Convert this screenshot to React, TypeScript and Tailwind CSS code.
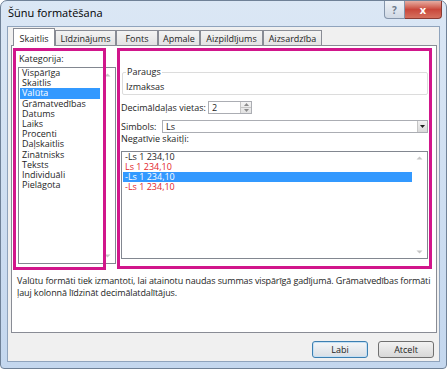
const categories = [
  "Vispārīga",
  "Skaitlis",
  "Valūta",
  "Grāmatvedības",
  "Datums",
  "Laiks",
  "Procenti",
  "Daļskaitlis",
  "Zinātnisks",
  "Teksts",
  "Individuāli",
  "Pielāgota",
];

const negatives = [
  { label: "-Ls 1 234,10", red: false },
  { label: "Ls 1 234,10", red: true },
  { label: "-Ls 1 234,10", red: false, selected: true },
  { label: "-Ls 1 234,10", red: true },
];

const tabs = [
  { label: "Skaitlis", w: "w-[42px]", active: true },
  { label: "Līdzinājums", w: "w-[61px]" },
  { label: "Fonts", w: "w-[42px]" },
  { label: "Apmale", w: "w-[42px]" },
  { label: "Aizpildījums", w: "w-[63px]" },
  { label: "Aizsardzība", w: "w-[59px]" },
];

function ScrollArrow({ up }: { up?: boolean }) {
  return (
    <svg width="7" height="4" viewBox="0 0 7 4" className={up ? "rotate-180" : ""}>
      <path d="M0.5 0.5 L3.5 3.5 L6.5 0.5 Z" fill="#c6c6c6" />
    </svg>
  );
}

export default function App() {
  return (
    <div className="w-[447px] h-[370px] bg-white font-['Open_Sans',sans-serif] text-[9px] text-[#1e1e1e] leading-none">
      <div className="w-[447px] h-[369px] border border-[#6f8197] rounded-t-[7px] rounded-b-[4px] bg-gradient-to-b from-[#dbe7f5] to-[#c4d7ee] flex flex-col">
        {/* title bar */}
        <div className="h-[25px] flex items-start shrink-0">
          <span className="pl-[7px] pt-[6px] text-[11px] text-black">Šūnu formatēšana</span>
          <div className="ml-auto mr-[4px] flex">
            <div className="w-[21px] h-[18px] border border-t-0 border-[#8595ab] rounded-bl-[4px] bg-gradient-to-b from-[#eef2f7] to-[#d0d9e5] flex items-center justify-center text-[10px] font-bold text-[#6d7a8a]">
              ?
            </div>
            <div className="w-[37px] h-[18px] border border-t-0 border-l-0 border-[#8a3a33] rounded-br-[4px] bg-gradient-to-b from-[#e5aca2] via-[#c9473b] to-[#d5705f] flex items-center justify-center text-[11px] font-bold text-white">
              x
            </div>
          </div>
        </div>

        {/* client area */}
        <div className="mx-[6px] h-[336px] border border-[#8fa3bc] bg-[#f0f0f0] flex flex-col">
          <div className="mt-[1px] ml-[5px] h-[17px] flex items-end">
            {tabs.map((t) =>
              t.active ? (
                <div
                  key={t.label}
                  className={`${t.w} h-[18px] -mb-px relative z-10 bg-white border border-b-0 border-[#898c95] flex items-center justify-center pt-[1px]`}
                >
                  {t.label}
                </div>
              ) : (
                <div
                  key={t.label}
                  className={`${t.w} h-[15px] border border-b-0 border-[#898c95] bg-gradient-to-b from-[#f3f3f3] to-[#e3e3e3] flex items-center justify-center`}
                >
                  {t.label}
                </div>
              ),
            )}
          </div>

          {/* tab panel */}
          <div className="ml-[3px] w-[426px] h-[288px] border border-[#898c95] bg-white relative">
            <div className="flex pl-[6px]">
              {/* category column */}
              <div className="w-[98px] flex flex-col">
                <div className="mt-[8px] ml-[1px] h-[10px] leading-[10px]">Kategorija:</div>
                <div className="mt-[3px] h-[197px] border border-[#828790] bg-white flex">
                  <div className="flex-1 flex flex-col pl-[1px]">
                    {categories.map((c) => (
                      <div
                        key={c}
                        className={`h-[10.2px] leading-[10.2px] pl-[2px] ${c === "Valūta" ? "bg-[#3399ff] text-white" : ""}`}
                      >
                        {c}
                      </div>
                    ))}
                  </div>
                  <div className="w-[15px] flex flex-col items-center justify-between py-[5px]">
                    <ScrollArrow up />
                    <ScrollArrow />
                  </div>
                </div>
              </div>

              {/* settings column */}
              <div className="ml-[5px] w-[307px] flex flex-col">
                <fieldset className="mt-[21px] ml-[1px] w-[306px] border border-[#dcdcdc] rounded-[2px] px-[3px] pb-[2px]">
                  <legend className="h-[10px] leading-[10px] px-[1px]">Paraugs</legend>
                  <div className="pt-[5px] h-[15px] leading-[10px]">Izmaksas</div>
                </fieldset>

                <div className="mt-[6px] h-[13px] flex items-center">
                  <span className="w-[87px]">Decimāldaļas vietas:</span>
                  <div className="w-[44px] h-[13px] border border-[#abadb3] flex items-stretch bg-white">
                    <span className="flex-1 pl-[3px] flex items-center">2</span>
                    <div className="w-[11px] border-l border-[#c5c5c5] flex flex-col bg-gradient-to-b from-[#f4f4f4] to-[#e2e2e2]">
                      <div className="flex-1 flex items-center justify-center border-b border-[#c5c5c5]">
                        <svg width="5" height="3" viewBox="0 0 5 3"><path d="M0 3 L2.5 0 L5 3 Z" fill="#8c8c8c" /></svg>
                      </div>
                      <div className="flex-1 flex items-center justify-center">
                        <svg width="5" height="3" viewBox="0 0 5 3"><path d="M0 0 L2.5 3 L5 0 Z" fill="#8c8c8c" /></svg>
                      </div>
                    </div>
                  </div>
                </div>

                <div className="mt-[6px] h-[13px] flex items-center">
                  <span className="w-[41px]">Simbols:</span>
                  <div className="w-[266px] h-[13px] border border-[#abadb3] bg-white flex items-stretch">
                    <span className="flex-1 pl-[3px] flex items-center">Ls</span>
                    <div className="w-[10px] border-l border-[#c5c5c5] bg-gradient-to-b from-[#f2f2f2] to-[#d9d9d9] flex items-center justify-center">
                      <svg width="5" height="3" viewBox="0 0 5 3"><path d="M0 0 L2.5 3 L5 0 Z" fill="#1e1e1e" /></svg>
                    </div>
                  </div>
                </div>

                <div className="mt-[1px] h-[10px] leading-[10px]">Negatīvie skaitļi:</div>
                <div className="mt-[7px] h-[108px] border border-[#828790] bg-white flex">
                  <div className="flex-1 flex flex-col pl-[1px]">
                    {negatives.map((n, i) => (
                      <div
                        key={i}
                        className={`h-[10px] leading-[10px] pl-[2px] ${
                          n.selected ? "bg-[#3399ff] text-white" : n.red ? "text-[#e2262b]" : ""
                        }`}
                      >
                        {n.label}
                      </div>
                    ))}
                  </div>
                  <div className="w-[15px] flex flex-col items-center justify-between py-[4px]">
                    <ScrollArrow up />
                    <ScrollArrow />
                  </div>
                </div>
              </div>
            </div>

            <p className="mt-[11px] pl-[5px] leading-[11.5px] tracking-[-0.12px] whitespace-nowrap">
              Valūtu formāti tiek izmantoti, lai atainotu naudas summas vispārīgā gadījumā. Grāmatvedības formāti
              <br />
              ļauj kolonnā līdzināt decimālatdalītājus.
            </p>

            {/* highlight frames drawn over the panel */}
            <div className="absolute left-[1px] top-[2px] w-[93px] h-[222px] border-[3px] border-[#d1168b] pointer-events-none" />
            <div className="absolute left-[105px] top-[2px] w-[315px] h-[221px] border-[3px] border-[#d1168b] pointer-events-none" />
          </div>

          <div className="mt-[8px] pr-[5px] flex justify-end gap-[10px]">
            <button className="w-[56px] h-[17px] rounded-[3px] border border-[#3c7fb1] bg-gradient-to-b from-[#f4f6f8] to-[#d9dfe5] shadow-[inset_0_0_0_1px_#c4e0f5] text-[9px]">
              Labi
            </button>
            <button className="w-[56px] h-[17px] rounded-[3px] border border-[#707070] bg-gradient-to-b from-[#f2f2f2] to-[#d8d8d8] text-[9px]">
              Atcelt
            </button>
          </div>
        </div>
      </div>
    </div>
  );
}
